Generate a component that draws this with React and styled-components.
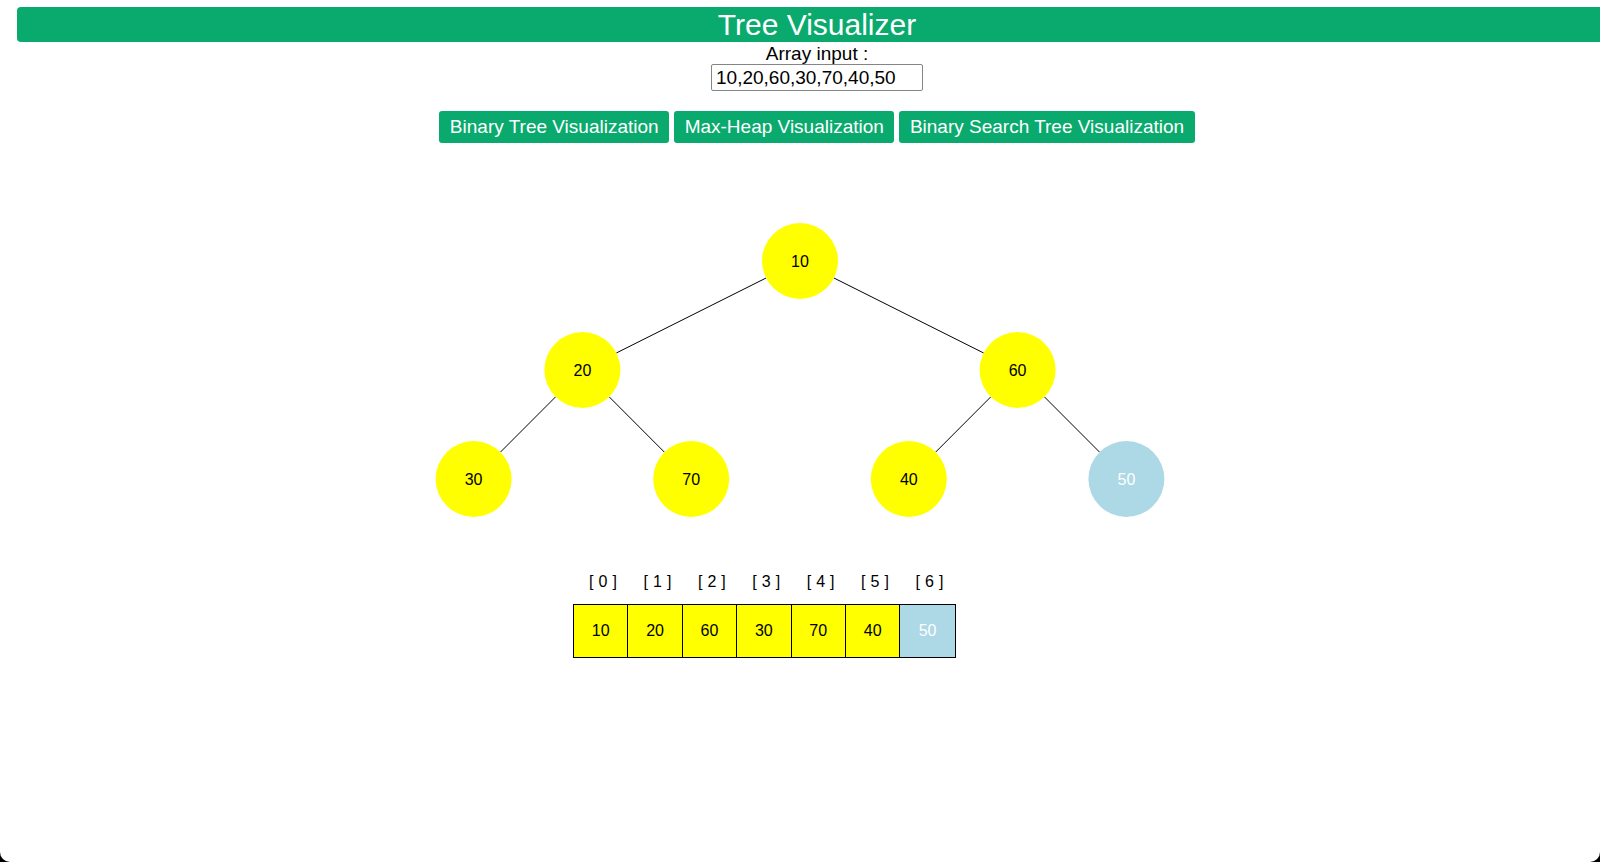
import React from "react";
import styled, { createGlobalStyle } from "styled-components";

const GREEN = "#0aaa6e";

const Global = createGlobalStyle`
  html, body { margin: 0; padding: 0; background: #000; overflow: hidden; }
  body { font-family: "Liberation Sans", Arial, sans-serif; }
`;

const Window = styled.div`
  width: 1600px;
  height: 862px;
  background: #fff;
  border-radius: 0 0 10px 10px;
  overflow: hidden;
`;

const Page = styled.div`
  margin-left: 17px;
  width: 1600px;
  padding-top: 7px;
  display: flex;
  flex-direction: column;
  align-items: center;
`;

const Header = styled.h1`
  align-self: stretch;
  margin: 0;
  height: 35px;
  line-height: 35px;
  background: ${GREEN};
  color: #fff;
  text-align: center;
  font-size: 30px;
  font-weight: normal;
  border-radius: 4px 0 0 4px;
`;

const Label = styled.label`
  margin-top: 1px;
  font-size: 19px;
  line-height: 21px;
  color: #000;
`;

const Input = styled.input`
  box-sizing: border-box;
  width: 212px;
  height: 27px;
  margin-top: 0;
  padding: 0 4px;
  border: 1px solid #858585;
  border-radius: 2px;
  font-family: "Liberation Sans", Arial, sans-serif;
  font-size: 19px;
  color: #000;
  outline: none;
`;

const ButtonRow = styled.div`
  display: flex;
  gap: 5px;
  margin-top: 20px;
`;

const Button = styled.button`
  height: 32px;
  padding: 0 10.5px;
  border: none;
  border-radius: 3px;
  background: ${GREEN};
  color: #fff;
  font-family: "Liberation Sans", Arial, sans-serif;
  font-size: 19px;
  cursor: pointer;
`;

const TreeSvg = styled.svg`
  display: block;
  align-self: flex-start;
  margin-top: 17px;
`;

const ArrayBlock = styled.div`
  align-self: flex-start;
  margin-left: 556px;
  margin-top: 52px;
  display: flex;
  flex-direction: column;
`;

const IndexRow = styled.div`
  display: flex;
  margin-left: 3px;
`;

const IndexLabel = styled.div`
  width: 54.4px;
  text-align: center;
  font-size: 16px;
  line-height: 20px;
  letter-spacing: 0.3px;
  color: #000;
`;

const CellRow = styled.div`
  display: flex;
  margin-top: 12px;
  border: 1px solid #000;
  align-self: flex-start;
`;

const Cell = styled.div`
  box-sizing: border-box;
  width: 54.4px;
  height: 52.4px;
  display: flex;
  align-items: center;
  justify-content: center;
  font-size: 16px;
  background: ${(p) => (p.$highlight ? "#add8e6" : "#ffff00")};
  color: ${(p) => (p.$highlight ? "#fff" : "#000")};
  border-right: ${(p) => (p.$last ? "none" : "1px solid #000")};
`;

const values = [10, 20, 60, 30, 70, 40, 50];
const highlighted = 6;

const R = 38;
const CX = 783;
const TOP = 101;
const LEVEL_H = 109;
const UNIT = 108.8;

function nodePositions() {
  const pos = [];
  values.forEach((v, i) => {
    const level = Math.floor(Math.log2(i + 1));
    const idxInLevel = i - (2 ** level - 1);
    const count = 2 ** level;
    const span = UNIT * 8;
    const slot = span / count;
    const x = CX - span / 2 + slot * (idxInLevel + 0.5);
    const y = TOP + level * LEVEL_H;
    pos.push({ x, y, v, i });
  });
  return pos;
}

function Tree() {
  const pos = nodePositions();
  const edges = [];
  pos.forEach((p) => {
    [2 * p.i + 1, 2 * p.i + 2].forEach((c) => {
      if (c < pos.length) {
        const q = pos[c];
        const dx = q.x - p.x;
        const dy = q.y - p.y;
        const d = Math.hypot(dx, dy);
        const ux = dx / d;
        const uy = dy / d;
        edges.push(
          <line
            key={`${p.i}-${c}`}
            x1={p.x + ux * R}
            y1={p.y + uy * R}
            x2={q.x - ux * R}
            y2={q.y - uy * R}
            stroke="#000"
            strokeWidth="1"
          />
        );
      }
    });
  });
  return (
    <TreeSvg width="1600" height="360" viewBox="0 0 1600 360">
      {edges}
      {pos.map((p) => (
        <g key={p.i}>
          <circle
            cx={p.x}
            cy={p.y}
            r={R}
            fill={p.i === highlighted ? "#add8e6" : "#ffff00"}
          />
          <text
            x={p.x}
            y={p.y}
            textAnchor="middle"
            dominantBaseline="central"
            fontFamily="Liberation Sans, Arial, sans-serif"
            fontSize="16"
            fill={p.i === highlighted ? "#fff" : "#000"}
          >
            {p.v}
          </text>
        </g>
      ))}
    </TreeSvg>
  );
}

export default function App() {
  return (
    <>
      <Global />
      <Window>
        <Page>
          <Header>Tree Visualizer</Header>
          <Label htmlFor="arr">Array input :</Label>
          <Input id="arr" defaultValue="10,20,60,30,70,40,50" />
          <ButtonRow>
            <Button>Binary Tree Visualization</Button>
            <Button>Max-Heap Visualization</Button>
            <Button>Binary Search Tree Visualization</Button>
          </ButtonRow>
          <Tree />
          <ArrayBlock>
            <IndexRow>
              {values.map((_, i) => (
                <IndexLabel key={i}>[ {i} ]</IndexLabel>
              ))}
            </IndexRow>
            <CellRow>
              {values.map((v, i) => (
                <Cell key={i} $highlight={i === highlighted} $last={i === values.length - 1}>
                  {v}
                </Cell>
              ))}
            </CellRow>
          </ArrayBlock>
        </Page>
      </Window>
    </>
  );
}
